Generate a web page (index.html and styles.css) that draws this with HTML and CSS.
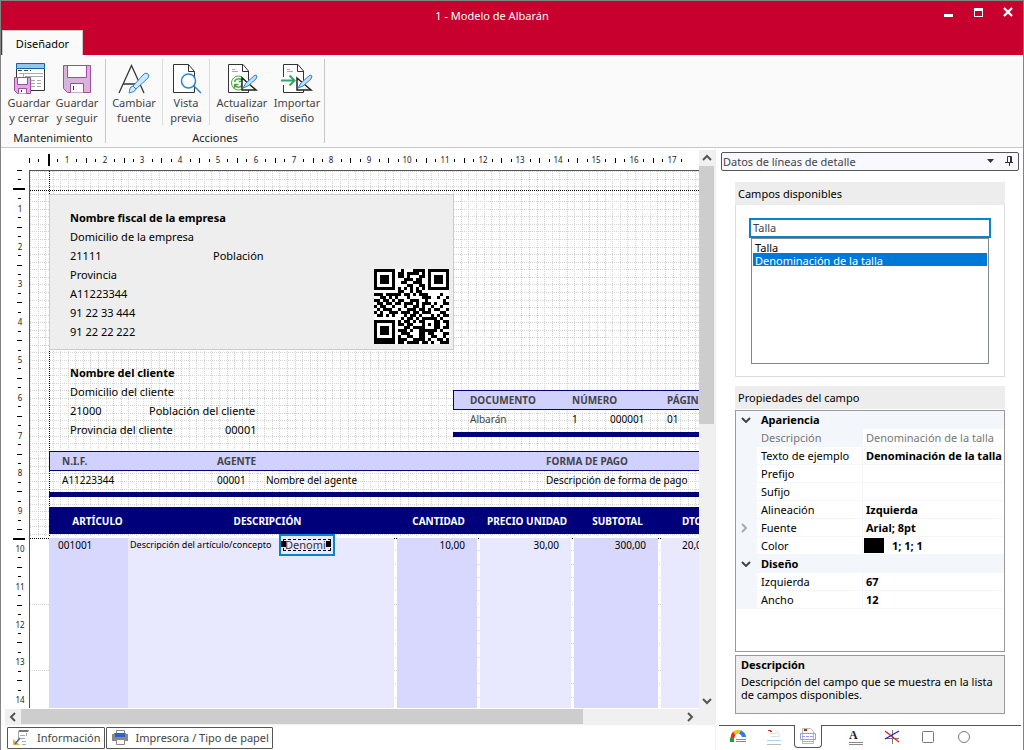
FILE: index.html
```html
<!DOCTYPE html>
<html lang="es">
<head>
<meta charset="utf-8">
<title>1 - Modelo de Albarán</title>
<link rel="stylesheet" href="styles.css">
</head>
<body>
<div class="window">
  <header class="titlebar">
    <h1 class="title">1 - Modelo de Albarán</h1>
    <div class="window-buttons">
      <button type="button" aria-label="Minimizar"><svg width="12" height="12"><path fill="#fff" d="M2 8h9v3H2z"/></svg></button>
      <button type="button" aria-label="Maximizar"><svg width="12" height="12"><path fill="#fff" fill-rule="evenodd" d="M2 2h9v9H2zM3 5v5h7V5z"/></svg></button>
      <button type="button" aria-label="Cerrar"><svg width="12" height="12"><path stroke="#fff" stroke-width="2.4" d="M2 2l8 8M10 2l-8 8"/></svg></button>
    </div>
    <button type="button" class="ribbon-tab">Diseñador</button>
  </header>

  <nav class="ribbon">
    <section class="group">
      <div class="group-buttons">
        <button type="button" class="tool">
          <svg width="32" height="32" viewBox="0 0 32 32" fill="none"><path fill="#fff" stroke="#333" d="M3.500 7v21.500h28V7"/><path fill="#91c8f0" stroke="#1565a8" d="M3.500 1.500h28v5h-28z"/><path stroke="#444" stroke-dasharray="4 2" d="M5 8.500h13"/><path stroke="#aaa" d="M6 11.500h24M10.500 11v6M12 14.500h18"/><path stroke="#aaa" stroke-dasharray="4 2" d="M18 18.500h12M18 21.500h12M18 24.500h12"/><path fill="#d9aedb" stroke="#9b4f9e" d="M1.500 15.500h16v16H4.500l-3-3z"/><path fill="#fff" stroke="#9b4f9e" d="M4.500 15.500h10v7h-10zM5.500 31.500v-5h8v5"/><path stroke="#333" d="M8.500 28v2"/></svg>
          <span>Guardar<br>y cerrar</span>
        </button>
        <button type="button" class="tool">
          <svg width="32" height="32" viewBox="0 0 32 32" fill="none"><path fill="#d9b3da" stroke="#9b4f9e" d="M2.500 3.500h27v27H6.500l-4-4z"/><path fill="#fff" stroke="#9b4f9e" d="M6.500 3.500h19v12h-19zM9.500 30.500v-9h13v9"/><path stroke="#333" d="M12.500 24v4"/></svg>
          <span>Guardar<br>y seguir</span>
        </button>
      </div>
      <h2 class="group-title">Mantenimiento</h2>
    </section>
    <section class="group actions">
      <div class="group-buttons">
        <button type="button" class="tool font-tool">
          <svg width="32" height="32" viewBox="0 0 32 32" fill="none"><path stroke="#333" stroke-width="1.300" d="M1 31L13.500 3.500 26 31M5.500 22h16.500"/><path fill="#cfe8fb" stroke="#2a86cc" d="M11 31c1-2 0-4 2-6l2-1 3 3c-1 3-4 3-7 4zM15 24l11-12c1-1 3-1 4 0s1 3 0 4L18 27z"/></svg>
          <span>Cambiar<br>fuente</span>
        </button>
        <button type="button" class="tool preview-tool">
          <svg width="32" height="32" viewBox="0 0 32 32" fill="none"><path fill="#fff" stroke="#333" d="M18.500 2.500h-15v28h21v-21zM18.500 2.500v7h6"/><circle cx="18.500" cy="19" r="7" fill="#fff" stroke="#2a86cc" stroke-width="1.500"/><path stroke="#2a86cc" stroke-width="1.500" d="M24 24l7 7"/></svg>
          <span>Vista<br>previa</span>
        </button>
        <button type="button" class="tool update-tool">
          <svg width="32" height="32" viewBox="0 0 32 32" fill="none"><path fill="#fff" stroke="#333" d="M17 2.500H2.500v28h20V9zM16.500 2.500v7h6"/><path stroke="#aaa" d="M6 7.500h3M6 9.500h6"/><circle cx="12.500" cy="21" r="7" stroke="#4aa63c"/><path stroke="#4aa63c" stroke-width="1.500" d="M8.500 20c1-4 6-4 8-1M16.500 15.500v4h-4M16.500 22c-1 4-6 4-8 1M8.500 26.500v-4h4"/><path fill="#fff" stroke="#222" stroke-width="1.500" d="M16 16l14 12H16z"/><path fill="#bfe0f8" stroke="#2a86cc" d="M17 26l3-5 9-8 2 1-1 3-8 7z"/></svg>
          <span>Actualizar<br>diseño</span>
        </button>
        <button type="button" class="tool import-tool">
          <svg width="32" height="32" viewBox="0 0 32 32" fill="none"><path fill="#fff" stroke="#333" d="M17 2.500H2.500v28h20V9zM16.500 2.500v7h6"/><path stroke="#aaa" d="M6 7.500h3M6 9.500h6"/><path fill="#fafafa" stroke="none" d="M1 15h4v8H1z"/><path stroke="#35a567" stroke-width="2" d="M0 18.500h13M8.500 13.500l5 5-5 5"/><path fill="#fff" stroke="#222" stroke-width="1.500" d="M16 16l14 12H16z"/><path fill="#bfe0f8" stroke="#2a86cc" d="M17 26l3-5 9-8 2 1-1 3-8 7z"/></svg>
          <span>Importar<br>diseño</span>
        </button>
      </div>
      <h2 class="group-title">Acciones</h2>
    </section>
  </nav>

  <div class="workspace">
    <main class="designer">
      <svg class="ruler-top" id="ruler-top" aria-hidden="true"></svg>
      <svg class="ruler-left" id="ruler-left" aria-hidden="true"></svg>
      <div class="canvas">
        <svg class="grid-lines" id="grid-lines" aria-hidden="true"></svg>

        <div class="block company">
          <p class="strong">Nombre fiscal de la empresa</p>
          <p>Domicilio de la empresa</p>
          <p class="split"><span class="zip">21111</span><span>Población</span></p>
          <p>Provincia</p>
          <p>A11223344</p>
          <p>91 22 33 444</p>
          <p>91 22 22 222</p>
          <svg class="qr" id="qr" viewBox="0 0 25 25" shape-rendering="crispEdges" role="img" aria-label="Código QR"></svg>
        </div>

        <div class="block client">
          <p class="strong">Nombre del cliente</p>
          <p>Domicilio del cliente</p>
          <p class="split"><span class="client-zip">21000</span><span>Población del cliente</span></p>
          <p class="split"><span class="client-region">Provincia del cliente</span><span>00001</span></p>
        </div>

        <div class="block band document">
          <div class="band-head"><span>DOCUMENTO</span><span class="span-two">NÚMERO</span><span>PÁGINA</span></div>
          <div class="band-row"><span class="muted">Albarán</span><span>1</span><span>000001</span><span>01</span></div>
        </div>

        <div class="block band agent">
          <div class="band-head"><span>N.I.F.</span><span class="span-two">AGENTE</span><span>FORMA DE PAGO</span></div>
          <div class="band-row"><span>A11223344</span><span>00001</span><span>Nombre del agente</span><span>Descripción de forma de pago</span></div>
        </div>

        <table class="block lines">
          <thead><tr><th class="c-item">ARTÍCULO</th><th class="c-desc">DESCRIPCIÓN</th><th class="c-qty">CANTIDAD</th><th class="c-price">PRECIO UNIDAD</th><th class="c-sub">SUBTOTAL</th><th class="c-disc">DTO.</th></tr></thead>
          <tbody><tr><td>001001</td><td class="desc">Descripción del artículo/concepto</td><td class="num">10,00</td><td class="num">30,00</td><td class="num">300,00</td><td class="disc">20,00</td></tr></tbody>
        </table>

        <div class="block selected"><span>Denomi</span></div>
      </div>
      <div class="scroll vertical">
        <button type="button" aria-label="Subir"><svg width="16" height="16"><path d="M4 10l4-4 4 4" fill="none" stroke="#555" stroke-width="2"/></svg></button>
        <div class="track"><div class="thumb"></div></div>
        <button type="button" aria-label="Bajar"><svg width="16" height="16"><path d="M4 6l4 4 4-4" fill="none" stroke="#555" stroke-width="2"/></svg></button>
      </div>
      <div class="scroll horizontal">
        <button type="button" aria-label="Izquierda"><svg width="16" height="16"><path d="M10 4L6 8l4 4" fill="none" stroke="#555" stroke-width="2"/></svg></button>
        <div class="track"><div class="thumb"></div></div>
        <button type="button" aria-label="Derecha"><svg width="16" height="16"><path d="M6 4l4 4-4 4" fill="none" stroke="#555" stroke-width="2"/></svg></button>
      </div>
      <div class="sheet-tabs">
        <button type="button"><svg width="16" height="16" viewBox="0 0 16 16"><path fill="#777" d="M5 2l1-2h10l-1 2z"/><path stroke="#aaa" fill="none" d="M5.500 2v8M13.500 3v3M7 5.500h5M7 8.500h5M9 11.500h4M9 14.500h4"/><path fill="#f0b040" d="M0 9l7 6H0z"/><path stroke="#2f6ea5" stroke-width="1.500" d="M2 14l5-6"/></svg>Información</button>
        <button type="button"><svg width="16" height="16" viewBox="0 0 16 16"><path fill="#fff" stroke="#888" d="M4.500.500h8v4h-8z"/><path fill="#888" d="M0 4h2v-1h1v4h10V3h1v1h2v7H0z"/><path fill="#2f62c8" d="M3 3h10v4H3z"/><path fill="#fff" stroke="#888" d="M4.500 9.500h8v5h-8z"/></svg>Impresora / Tipo de papel</button>
      </div>
    </main>

    <aside class="panel">
      <button type="button" class="panel-title"><span>Datos de líneas de detalle</span>
        <svg width="7" height="4"><path fill="#333" d="M0 0h7L3.500 4z"/></svg>
        <svg width="8" height="10"><path fill="none" stroke="#333" d="M2.500 6V.500h4V6M0 6.500h8M4.500 7v3M5.500 1v5"/></svg>
      </button>
      <div class="panel-body">
        <section class="box">
          <h2><label for="search">Campos disponibles</label></h2>
          <div class="box-content">
            <input id="search" type="text" value="Talla">
            <select size="8" aria-label="Campos"><option>Talla</option><option selected>Denominación de la talla</option></select>
          </div>
        </section>
        <section class="props">
          <h2>Propiedades del campo</h2>
          <div class="props-grid">
            <table>
              <colgroup><col class="col-mark"><col class="col-name"><col></colgroup>
              <tr class="cat"><td><svg width="10" height="6"><path d="M1 1l4 4 4-4" fill="none" stroke="#444" stroke-width="2"/></svg></td><th colspan="2">Apariencia</th></tr>
              <tr class="dim"><td></td><th>Descripción</th><td>Denominación de la talla</td></tr>
              <tr><td></td><th>Texto de ejemplo</th><td>Denominación de la talla</td></tr>
              <tr><td></td><th>Prefijo</th><td></td></tr>
              <tr><td></td><th>Sufijo</th><td></td></tr>
              <tr><td></td><th>Alineación</th><td>Izquierda</td></tr>
              <tr><td><svg width="6" height="10"><path d="M1 1l4 4-4 4" fill="none" stroke="#aaa" stroke-width="2"/></svg></td><th>Fuente</th><td>Arial; 8pt</td></tr>
              <tr><td></td><th>Color</th><td class="color"><span class="swatch"></span>1; 1; 1</td></tr>
              <tr class="cat"><td><svg width="10" height="6"><path d="M1 1l4 4 4-4" fill="none" stroke="#444" stroke-width="2"/></svg></td><th colspan="2">Diseño</th></tr>
              <tr><td></td><th>Izquierda</th><td>67</td></tr>
              <tr><td></td><th>Ancho</th><td>12</td></tr>
            </table>
          </div>
          <div class="help"><h3>Descripción</h3><p>Descripción del campo que se muestra en la lista de campos disponibles.</p></div>
        </section>
      </div>
      <nav class="panel-tabs">
        <button type="button" aria-label="General"><svg width="16" height="16" viewBox="0 0 16 16" fill="none"><path stroke="#e03020" stroke-width="4" d="M2.500 9c0-2 1-4 2-5"/><path stroke="#18a040" stroke-width="4" d="M2 9v4"/><path stroke="#f0c020" stroke-width="4" d="M4 4c2-1 4-2 6-1"/><path stroke="#2f7fd0" stroke-width="4" d="M10 3c2 1 4 3 4 5"/><path stroke="#888" d="M6 10.500h10M6 12.500h10"/></svg></button>
        <button type="button" aria-label="Página"><svg width="16" height="16" viewBox="0 0 16 16" fill="none"><path stroke="#ddd" d="M4 4.500h6M5 7.500h7M9 1.500l4 3v5"/><path stroke="#c03030" d="M2 1.500h3"/><path stroke="#3050c0" d="M4 2.500h2"/><path stroke="#a8d4f0" d="M1 11.500h14"/><path stroke="#bbb" d="M1 15.500h14"/></svg></button>
        <button type="button" class="active" aria-label="Líneas"><svg width="16" height="16" viewBox="0 0 16 16" fill="none"><path stroke="#bbb" d="M2.500 15.500V.500h8l3 3v12z"/><path stroke="#c02020" stroke-width="2" d="M4 2h3"/><path stroke="#9a9af0" d="M.500 5.500h15v6H.500z"/><path stroke="#9a9af0" stroke-dasharray="3 1" d="M2 8.500h12"/><path stroke="#aaaaf0" d="M2 13.500h12"/></svg></button>
        <button type="button" aria-label="Texto" class="text-tool"><span>A</span></button>
        <button type="button" aria-label="Línea"><svg width="16" height="16" viewBox="0 0 16 16" fill="none"><path stroke="#777" d="M8.500 1v14M1 9.500h14"/><path stroke="#e02020" stroke-width="1.300" d="M1 2l14 11"/><path stroke="#2020d0" stroke-width="1.300" d="M15 2L1 10"/></svg></button>
        <button type="button" aria-label="Rectángulo"><svg width="14" height="14"><rect x="1.500" y="1.500" width="11" height="11" rx="1" fill="none" stroke="#777"/></svg></button>
        <button type="button" aria-label="Elipse"><svg width="14" height="14"><circle cx="7" cy="7" r="5.500" fill="none" stroke="#777"/></svg></button>
      </nav>
    </aside>
  </div>
</div>
<script src="script.js"></script>
</body>
</html>
```
FILE: styles.css
```css
* { box-sizing: border-box; }
body { margin: 0; font: 11px/15px "Noto Sans", "Open Sans", sans-serif; color: #000; background: #fff; }
h1, h2, h3, p { margin: 0; font-size: inherit; font-weight: 400; }
button { margin: 0; padding: 0; border: 0; background: none; font: inherit; color: inherit; }
svg { display: block; flex: none; }

.window { display: flex; flex-direction: column; height: 100vh; border: 1px solid #838383; border-bottom: 0; overflow: hidden; }

.titlebar { flex: none; display: grid; grid-template-columns: 1fr auto; grid-template-rows: 29px 25px; background: #c8002d; color: #fff; padding-left: 1px; }
.title { line-height: 30px; text-align: center; padding-left: 40px; }
.window-buttons { display: flex; gap: 18px; padding: 5px 9px 0 0; align-items: flex-start; }
.window-buttons button { width: 12px; height: 12px; }
.ribbon-tab { width: 81px; height: 25px; background: #fafafa; color: #000; border: 1px solid #c8c8c8; border-bottom: 0; justify-self: start; }

.ribbon { flex: none; display: flex; height: 93px; background: #fafafa; border-bottom: 1px solid #c8c8c8; padding: 4px 0 4px 4px; color: #444; }
.group { display: flex; flex-direction: column; justify-content: space-between; padding-right: 4px; border-right: 1px solid #c8c8c8; }
.group-buttons { display: flex; }
.tool { width: 48px; display: flex; flex-direction: column; align-items: center; gap: 1px; padding-top: 3px; }
.font-tool { width: 57px; border-right: 1px solid #dcdcdc; }
.preview-tool { width: 47px; border-right: 1px solid #dcdcdc; }
.update-tool { width: 64px; }
.import-tool { width: 46px; }
.group-title { height: 13px; line-height: 15px; text-align: center; color: #222; }
.actions .group-title { padding-left: 4px; }

.workspace { flex: 1; min-height: 0; display: grid; grid-template-columns: 1fr 307px; }

.designer { min-width: 0; min-height: 0; display: grid; grid-template-columns: 28px 1fr 16px; grid-template-rows: 22px 1fr 16px 25px; border-right: 1px solid #f0f0f0; }
.ruler-top { grid-area: 1 / 1 / 2 / 3; width: 100%; height: 22px; }
.ruler-left { grid-area: 2 / 1; width: 28px; height: 100%; }
.ruler-top text, .ruler-left text { font-size: 8px; fill: #222; text-anchor: middle; }
.canvas { grid-area: 2 / 2; position: relative; overflow: hidden; border-left: 1px solid #555; border-top: 1px solid #555; margin-bottom: 1px; }
.grid-lines { width: 100%; height: 100%; }

.scroll { display: flex; background: #f0f0f0; }
.scroll .track { flex: 1; }
.scroll .thumb { background: #cdcdcd; }
.vertical { grid-area: 1 / 3 / 3 / 4; flex-direction: column; margin-top: 2px; }
.vertical .thumb { height: 49%; width: 15px; }
.horizontal { grid-area: 3 / 1 / 4 / 4; margin-left: 4px; padding-right: 17px; }
.horizontal .thumb { width: 85%; height: 15px; }

.sheet-tabs { grid-area: 4 / 1 / 5 / 4; display: flex; gap: 1px; padding: 2px 0 1px 6px; }
.sheet-tabs button { display: flex; align-items: center; gap: 8px; padding: 0 3px 1px 5px; border: 1px solid #555; border-radius: 1px; color: #444; }

/* Objects placed on the design canvas */
.block { position: absolute; }
.strong { font-weight: 700; }
.split { display: flex; }
.company { left: 19px; top: 23px; width: 405px; height: 156px; padding: 13px 20px; background: #eee; border: 1px solid #ccc; line-height: 19px; }
.zip { width: 143px; }
.qr { position: absolute; right: 4px; bottom: 5px; width: 75px; height: 75px; background: #fff; }
.client { left: 40px; top: 192px; line-height: 19px; }
.client-zip { width: 79px; }
.client-region { width: 155px; }

.band { font-size: 10px; border-bottom: 5px solid #00007b; width: 700px; }
.band-head, .band-row { display: grid; }
.band-head { height: 20px; line-height: 18px; background: #d1d1ff; border: 1px solid #00007b; color: #444; font-weight: 700; }
.band-row { height: 22px; line-height: 18px; }
.band .span-two { grid-column: span 2; }
.muted { color: #444; }
.document { left: 423px; top: 219px; }
.document .band-head, .document .band-row { grid-template-columns: 102px 38px 57px 1fr; padding-left: 16px; }
.agent { left: 19px; top: 280px; }
.agent .band-head, .agent .band-row { grid-template-columns: 155px 49px 280px 1fr; padding-left: 12px; }
.band .band-row { border-left: 1px solid transparent; }
.agent .band-row { height: 21px; }

.lines { left: 19px; top: 336px; width: 700px; table-layout: fixed; border-spacing: 0; font-size: 10px; }
.lines th { height: 31px; padding: 0; line-height: 27px; padding-top: 1px; background: #00007b; color: #fff; background-clip: padding-box; border-bottom: 4px solid transparent; line-height: 26px; }
.lines td { height: 170px; padding: 0 9px; line-height: 14px; vertical-align: top; background: #e8e8ff; background-clip: padding-box; border-right: 3px solid transparent; white-space: nowrap; }
.lines td:nth-child(odd) { background-color: #d8d8ff; }
.lines td:first-child { border-right: 0; }
.lines .c-item { width: 79px; padding-left: 18px; }
.lines .c-desc { width: 269px; padding-left: 10px; }
.lines .c-qty { width: 83px; }
.lines .c-price { width: 94px; }
.lines .c-sub { width: 87px; }
.lines .c-disc { text-align: left; padding-left: 21px; }
.lines .num { text-align: right; padding-right: 12px; }
.lines .desc { padding: 0 2px; font-size: 9px; }
.lines .disc { padding-left: 21px; }

.selected { left: 249px; top: 363px; width: 56px; height: 22px; padding: 3px 2px; border: 2px solid #0a84c8; background: #e8e8ff; }
.selected span { display: block; height: 12px; line-height: 10px; padding-left: 1px; border: 1px dashed #000; overflow: hidden; color: #333; }
.selected::before, .selected::after { content: ""; position: absolute; top: 5px; width: 5px; height: 6px; background: #000; }
.selected::before { left: 0; }
.selected::after { right: 2px; }

/* Side panel */
.panel { display: flex; flex-direction: column; min-width: 0; }
.panel-title { display: flex; align-items: center; gap: 11px; height: 19px; margin: 4px 4px 0 5px; padding: 0 5px 1px 1px; border: 1px solid #555; border-radius: 2px; background: #f8f8ff; color: #444; }
.panel-title span { flex: 1; text-align: left; }
.panel-body { flex: 1; min-height: 0; display: flex; flex-direction: column; gap: 9px; padding: 11px 18px 11px 19px; }
.panel h2 { height: 23px; padding-left: 3px; line-height: 23px; background: #ededed; }
.box-content { display: flex; flex-direction: column; border: 1px solid #dcdcdc; border-top: 0; padding: 13px 13px 12px; }
.box input { height: 20px; padding: 0 2px 2px; border: 2px solid #0a84c8; font: inherit; color: #444; outline: 0; }
.box select { height: 126px; margin: 0 2px; padding: 1px; border: 1px solid #828790; border-radius: 0; font: inherit; background: #fff; overflow: hidden; outline: 0; }
.box option { padding: 0 2px; line-height: 12px; min-height: 13px; height: 13px; color: #000; }
.box option:checked { background: linear-gradient(#0078d7, #0078d7); color: #fff; }
.props { flex: 1; min-height: 0; display: flex; flex-direction: column; }
.props-grid { flex: 1; margin-top: 1px; border: 1px solid #999; overflow: hidden; }
.props table { width: 100%; border-spacing: 0; table-layout: fixed; }
.col-mark { width: 21px; }
.col-name { width: 106px; }
.props tr > * { height: 18px; padding: 0 3px; line-height: 17px; text-align: left; border-bottom: 1px solid #f3f6fb; font-weight: 400; white-space: nowrap; overflow: hidden; }
.props tr > :first-child { padding: 0 5px; background: #f3f6fb; }
.props tr > :nth-child(2) { padding-left: 4px; border-right: 1px solid #f3f6fb; }
.props tr > :nth-child(3) { font-weight: 700; }
.props .cat > * { background: #f3f6fb; font-weight: 700; }
.props .dim > * { color: #777; }
.props .dim > :nth-child(2) { background: #f3f6fb; }
.props .dim > :nth-child(3) { font-weight: 400; }
.props .color { padding-left: 1px; }
.swatch { float: left; width: 20px; height: 15px; margin: 1px 8px 0 0; background: #000; }
.help { height: 59px; margin-top: 3px; padding: 1px 5px; border: 1px solid #999; background: #efefef; line-height: 13px; }
.help h3 { font-weight: 700; line-height: 16px; margin-bottom: 2px; }
.panel-tabs { flex: none; height: 25px; display: flex; margin: 0 2px 0 3px; padding-left: 1px; border-top: 1px solid #555; }
.panel-tabs button { width: 36px; height: 22px; display: flex; align-items: center; justify-content: center; }
.panel-tabs .active { width: 28px; margin: -1px 16px 0 2px; height: 23px; background: #fff; border: 1px solid #555; border-top: 0; border-radius: 0 0 4px 4px; }
.text-tool span { width: 14px; height: 15px; font: 700 12px/11px "Liberation Serif", serif; color: #222; text-align: left; border-bottom: 1px solid #888; box-shadow: inset 0 -1px #fff, inset 0 -2px #888; }
```
FILE: script.js
```js
const NS = 'http://www.w3.org/2000/svg';
const CM = 37.8;
const add = (parent, tag, attrs, text) => {
  const el = document.createElementNS(NS, tag);
  for (const key in attrs) el.setAttribute(key, attrs[key]);
  if (text !== undefined) el.textContent = text;
  parent.appendChild(el);
};
const rect = (parent, x, y, width, height, fill = '#000') => add(parent, 'rect', { x, y, width, height, fill });

/* Rulers: a number at every centimetre, ticks at every quarter */
const rulerTop = document.getElementById('ruler-top');
const rulerLeft = document.getElementById('ruler-left');
const widthLimit = rulerTop.clientWidth - 8;
const heightLimit = rulerLeft.clientHeight - 4;
for (let q = 0; q < 400; q++) {
  const offset = q * CM / 4;
  const x = Math.round(28 + offset);
  const y = Math.round(offset);
  const number = q % 4 === 0 && q > 0;
  const long = q % 2 === 0;
  if (x < widthLimit) {
    if (number) add(rulerTop, 'text', { x, y: 15 }, q / 4);
    else if (q === 2) rect(rulerTop, x, 6, 2, 12);
    else rect(rulerTop, x, long ? 10 : 11, 1, long ? 5 : 3);
  }
  if (y < heightLimit) {
    if (number) add(rulerLeft, 'text', { x: 19, y: y + 4 }, q / 4);
    else if (q === 2 || q === 39) rect(rulerLeft, 12, y - 1, 12, 2);
    else rect(rulerLeft, long ? 16 : 17, y, long ? 5 : 3, 1);
  }
}

/* Dotted layout grid, the black margins and the detail band */
const grid = document.getElementById('grid-lines');
const line = (x1, y1, x2, y2, stroke) => add(grid, 'path', { d: `M${x1} ${y1}L${x2} ${y2}`, stroke, 'stroke-dasharray': '1 1', 'shape-rendering': 'crispEdges' });
for (let i = 0; i < 200; i++) {
  const x = Math.round(i * CM / 5) + 0.5;
  line(x, 0, x, 366, '#d4d4d4');
  if (x < 366) line(0, x, 2000, x, '#d4d4d4');
}
for (let i = 1; i < 60; i++) {
  const y = Math.round(366 + i * 13.3) + 0.5;
  line(i % 5 ? 19 : 0, y, 2000, y, '#d4d4d4');
}
line(0, 19.5, 2000, 19.5, '#000');
line(19.5, 0, 19.5, 366, '#000');
line(0, 367.5, 2000, 367.5, '#000');

const QR = [
  '1111111001000111101111111', '1000001011011110101000001', '1011101011010001101011101',
  '1011101000111011001011101', '1011101001100111001011101', '1000001000011001101000001',
  '1111111010101010101111111', '0000000011001011000000000', '1110111110110101110000100',
  '0011010100010000111001001', '1101101011001110010000010', '0110110110111010111010011',
  '1011001000100110100100100', '0101110010011101101011001', '1010011101110110111000110',
  '0110101000101101000101011', '0000000001011010111110100', '1111111010110101100011011',
  '1000001011011000101011001', '1011101000110111100011011', '1011101011101001111110100',
  '1011101001110001101100011', '1000001010011001100110010', '1111111011100111101001101',
  '1111111011011110110100111'
];
const qr = document.getElementById('qr');
QR.forEach((row, y) => [...row].forEach((bit, x) => { if (bit === '1') rect(qr, x, y, 1, 1); }));
```
